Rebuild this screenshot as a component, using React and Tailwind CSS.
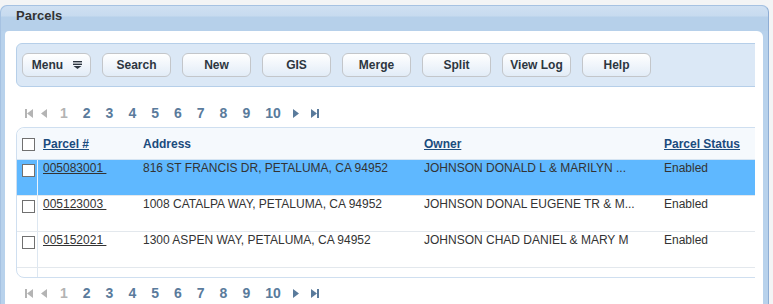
import React from 'react';

const buttons = ['Search', 'New', 'GIS', 'Merge', 'Split', 'View Log', 'Help'];

const rows = [
  {
    id: '005083001',
    address: '816 ST FRANCIS DR, PETALUMA, CA 94952',
    owner: 'JOHNSON DONALD L & MARILYN ...',
    status: 'Enabled',
    selected: true,
  },
  {
    id: '005123003',
    address: '1008 CATALPA WAY, PETALUMA, CA 94952',
    owner: 'JOHNSON DONAL EUGENE TR & M...',
    status: 'Enabled',
  },
  {
    id: '005152021',
    address: '1300 ASPEN WAY, PETALUMA, CA 94952',
    owner: 'JOHNSON CHAD DANIEL & MARY M',
    status: 'Enabled',
  },
];

const MenuIcon = () => (
  <svg width="9" height="8" viewBox="0 0 9 8" className="text-[#2d3640]">
    <rect x="0" y="0" width="9" height="1.4" fill="currentColor" />
    <rect x="0" y="2.6" width="9" height="1.4" fill="currentColor" />
    <path d="M0.5 5 L8.5 5 L4.5 8 Z" fill="currentColor" />
  </svg>
);

const FirstIcon = ({ color }) => (
  <svg width="8" height="9" viewBox="0 0 8 9">
    <rect x="0" y="0" width="2" height="9" fill={color} />
    <path d="M8 0 L8 9 L2 4.5 Z" fill={color} />
  </svg>
);

const PrevIcon = ({ color }) => (
  <svg width="7" height="9" viewBox="0 0 7 9">
    <path d="M7 0 L7 9 L1 4.5 Z" fill={color} />
  </svg>
);

const NextIcon = ({ color }) => (
  <svg width="7" height="9" viewBox="0 0 7 9">
    <path d="M0 0 L0 9 L6 4.5 Z" fill={color} />
  </svg>
);

const LastIcon = ({ color }) => (
  <svg width="8" height="9" viewBox="0 0 8 9">
    <path d="M0 0 L0 9 L6 4.5 Z" fill={color} />
    <rect x="6" y="0" width="2" height="9" fill={color} />
  </svg>
);

const Pager = ({ className = '' }) => (
  <div className={`flex items-center h-[16px] leading-[16px] pl-[9px] text-[14px] font-bold ${className}`}>
    <FirstIcon color="#b4b4b4" />
    <span className="ml-[7px] flex items-center">
      <PrevIcon color="#b4b4b4" />
    </span>
    <div className="flex items-center gap-[15px] ml-[13px]">
      <span className="text-[#b3b3b3]">1</span>
      {[2, 3, 4, 5, 6, 7, 8, 9, 10].map((n) => (
        <span key={n} className="text-[#5a7b9c] cursor-pointer">{n}</span>
      ))}
    </div>
    <span className="ml-[12px] flex items-center">
      <NextIcon color="#5a7b9c" />
    </span>
    <span className="ml-[11px] flex items-center">
      <LastIcon color="#5a7b9c" />
    </span>
  </div>
);

const Checkbox = () => (
  <div className="w-[13px] h-[13px] border border-[#707070] bg-white" />
);

const Button = ({ children }) => (
  <button className="w-[69px] h-[24px] rounded-[6px] border border-[#c3c6ca] bg-gradient-to-b from-[#ffffff] to-[#e2ecf7] text-[12px] font-bold text-[#2d3640] flex items-center justify-center">
    {children}
  </button>
);

const cols = 'grid grid-cols-[21px_100px_281px_240px_157px]';

export default function App() {
  return (
    <div className="w-[773px] h-[304px] overflow-hidden bg-[#f3f4f5] pt-[5px] font-['Liberation_Sans',Arial,sans-serif]">
      <div className="w-[769px] h-[310px] flex flex-col rounded-t-[7px] border border-[#a6c2e2] border-r-[#8eadd4] bg-[#b8d2ec]">
        <div className="h-[25px] shrink-0 flex items-center pl-[15px] pb-[5px] rounded-t-[7px] bg-[linear-gradient(#cfe0f2_0%,#c7dbef_40%,#b6d0ea_44%,#b6d0ea_100%)]">
          <span className="text-[13px] font-bold text-[#333]">Parcels</span>
        </div>

        <div className="flex-1 ml-[4px] mr-[5px] bg-white rounded-tl-[4px] rounded-tr-[6px] pl-[11px] pr-[8px] pt-[12px]">
          <div className="w-[739px] overflow-hidden">
            <div className="w-[800px] h-[44px] rounded-l-[6px] border border-[#b6cfe9] bg-[#dbe8f6] pl-[5px] pt-[9px] flex gap-[11px]">
              <Button>
                <span className="flex items-center gap-[10px] pl-[1px]">
                  Menu
                  <MenuIcon />
                </span>
              </Button>
              {buttons.map((b) => (
                <Button key={b}>{b}</Button>
              ))}
            </div>

            <div className="pt-[18px] h-[40px]">
              <Pager />
            </div>

            <div className="w-[800px] rounded-l-[8px] border border-[#cfdff0] text-[12px] leading-[14px]">
              <div className={`${cols} h-[32px] items-center bg-[#f5f9fd] border-b border-[#d5e4f2] rounded-tl-[8px] font-bold text-[#1b4b7d]`}>
                <div className="pl-[5px] pt-[1px]">
                  <Checkbox />
                </div>
                <div className="pl-[5px]">
                  <span className="underline">Parcel #</span>
                </div>
                <div className="pl-[5px]">Address</div>
                <div className="pl-[5px]">
                  <span className="underline">Owner</span>
                </div>
                <div className="pl-[5px]">
                  <span className="underline">Parcel Status</span>
                </div>
              </div>

              {rows.map((r) => (
                <div
                  key={r.id}
                  className={`${cols} h-[36px] border-b border-[#e3e8ed] text-[#333] ${r.selected ? 'bg-[#5fb8ff]' : 'bg-white'}`}
                >
                  <div className={`pl-[5px] pt-[4px] border-r ${r.selected ? 'border-[#eaf4fd]' : 'border-[#dde7f1]'}`}>
                    <Checkbox />
                  </div>
                  <div className="pl-[5px] pt-[1px]">
                    <span className="underline text-[#333] cursor-pointer">{r.id + '\u00a0'}</span>
                  </div>
                  <div className="pl-[5px] pt-[1px] whitespace-nowrap">{r.address}</div>
                  <div className="pl-[5px] pt-[1px] whitespace-nowrap">{r.owner}</div>
                  <div className="pl-[5px] pt-[1px]">{r.status}</div>
                </div>
              ))}

              <div className={`${cols} h-[9px] rounded-bl-[8px]`}>
                <div className="border-r border-[#dde7f1]" />
              </div>
            </div>

            <div className="pt-[7px]">
              <Pager />
            </div>
          </div>
        </div>
      </div>
    </div>
  );
}
